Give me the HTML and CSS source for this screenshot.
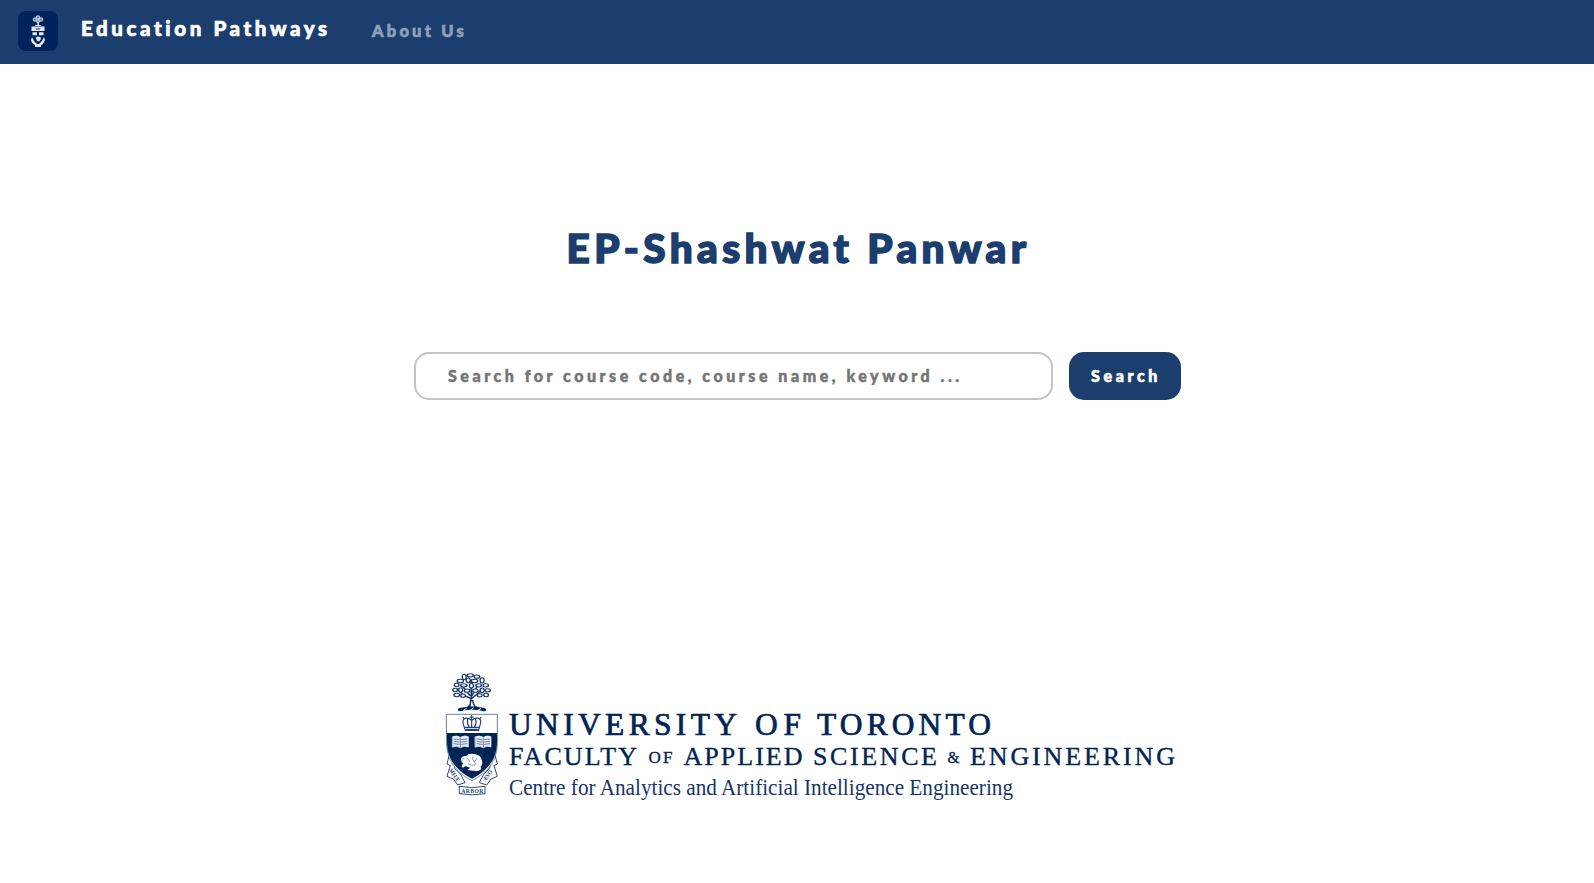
FILE: index.html
```html
<!DOCTYPE html>
<html lang="en">
<head>
<meta charset="utf-8">
<title>Education Pathways</title>
<link rel="stylesheet" href="styles.css">
</head>
<body>
<nav class="navbar">
  <svg class="nav-logo" width="40" height="40" viewBox="0 0 40 40" aria-hidden="true">
    <rect width="40" height="40" rx="8" fill="#00235c"/>
    <g fill="#e4eaf2">
      <g fill="#5d7299" stroke="#b9c5d8" stroke-width="1.300">
        <circle cx="20" cy="6.500" r="1.700"/><circle cx="17" cy="8.500" r="1.600"/><circle cx="23" cy="8.500" r="1.600"/><circle cx="20" cy="10" r="1.500"/>
      </g>
      <path d="M19.400 11h1.400v3h2v1h-5.500v-1h2.100zM13.500 15.500h13v4.500h-13z"/>
      <path d="M17.500 16.500l1.500 1 1-1.500 1 1.500 1.500-1-.5 2.500h-4z" fill="#7388aa"/>
      <path d="M14.500 21.200h4.500v3h-4.500zM21 21.200h4.500v3H21zM17.500 27l2-1.500 3 .5 .5 2-2 2.500-2-.5-.5-1.500z"/>
      <path d="M14 26l2 4 3 3h2l3-3 2-4 1 3-2 4-2 1v2h-6v-2l-3-2-1-3z"/>
    </g>
  </svg>
  <a class="brand">Education Pathways</a>
  <a class="nav-link">About Us</a>
</nav>
<main class="page">
  <h1 class="title">EP-Shashwat Panwar</h1>
  <form class="search">
    <input class="search-input" type="text" placeholder="Search for course code, course name, keyword ...">
    <button class="search-button" type="button">Search</button>
  </form>
  <svg class="faculty-logo" width="740" height="140" viewBox="0 0 740 140" role="img" aria-label="University of Toronto">
    <g transform="scale(.33333)" stroke-linecap="round" stroke-linejoin="round">
      <!-- tree -->
      <g transform="translate(-11 0) scale(1.19 1)">
      <path d="M97 126l3-25-22-13-10-16M100 102l18-17 11-15M101 100l-1-55M97 91l-16-24M103 91l14-30M91 127q8-5 8-20h6q0 15 10 20z" fill="none" stroke="#17356a" stroke-width="4"/>
      <g fill="#fff" stroke="#17356a" stroke-width="3.200">
        <ellipse cx="98" cy="31" rx="8" ry="5"/><ellipse cx="83" cy="36" rx="5" ry="8"/><ellipse cx="115" cy="35" rx="7" ry="5"/><ellipse cx="73" cy="48" rx="8" ry="5"/><ellipse cx="93" cy="46" rx="5" ry="7"/><ellipse cx="109" cy="48" rx="8" ry="5"/><ellipse cx="128" cy="46" rx="5" ry="8"/>
        <ellipse cx="64" cy="60" rx="6" ry="5"/><ellipse cx="82" cy="61" rx="8" ry="5"/><ellipse cx="101" cy="62" rx="5" ry="7"/><ellipse cx="119" cy="61" rx="7" ry="5"/><ellipse cx="137" cy="61" rx="7" ry="5"/>
        <ellipse cx="60" cy="75" rx="6" ry="5"/><ellipse cx="74" cy="75" rx="5" ry="7"/><ellipse cx="90" cy="77" rx="7" ry="5"/><ellipse cx="111" cy="77" rx="7" ry="5"/><ellipse cx="128" cy="76" rx="5" ry="7"/><ellipse cx="142" cy="76" rx="7" ry="5"/>
        <ellipse cx="64" cy="90" rx="7" ry="5"/><ellipse cx="80" cy="92" rx="6" ry="5"/><ellipse cx="122" cy="91" rx="6" ry="5"/><ellipse cx="138" cy="90" rx="6" ry="5"/>
      </g>
      </g>
      <path d="M74 134q37-9 74 0" fill="none" stroke="#002453" stroke-width="10"/>
      <path d="M86 136l8-6M107 135l8-6M129 136l8-5" stroke="#fff" stroke-width="3"/>
      <!-- ribbon ends -->
      <g fill="#fff" stroke="#2b467a" stroke-width="3">
        <path d="M43 270l-7 27 10 5-10 32 19 8 13 18 22-7-13-25-18-18-5-36zM180 270l7 27-10 5 10 32-19 8-13 18-22-7 13-25 18-18 5-36z"/>
        <path d="M74 364q36 8 76 0v22q-38 7-76 0z"/>
      </g>
      <!-- shield -->
      <path d="M35 148h152v83c0 55-28 92-76 116-48-24-76-61-76-116z" fill="#fff" stroke="#6e82a5" stroke-width="3"/>
      <path d="M36 204h150v27c0 51-28 86-75 110-47-24-75-59-75-110z" fill="#002453"/>
      <!-- crown -->
      <g fill="#fff" stroke="#23406f" stroke-width="3.500">
        <path d="M87 184q-8-21 3-24 9-3 20 6 11-9 21-6 11 3 3 24l-3 12H91z"/>
        <path d="M91 187h40M110 166v20M98 163q-3 12 4 22M122 163q4 12-3 22M110 152v14M105 156h10M88 161l-4-4M134 161l4-4M94 193h33"/>
      </g>
      <!-- books -->
      <g fill="#e6edf4" stroke="#fff" stroke-width="2">
        <path d="M53 215q12-5 23 2 12-7 24-2v31q-13-5-24 2-12-7-23-2zM121 215q12-5 24 2 11-7 23-2v31q-12-5-23 2-12-7-24-2z"/>
      </g>
      <path d="M76 218v28M145 218v28M57 222l15 2M57 229l15 2M57 236l15 2M80 224l16-2M80 231l16-2M80 238l16-2M126 222l15 2M126 229l15 2M126 236l15 2M149 224l15-2M149 231l15-2M149 238l15-2" stroke="#314f7b" stroke-width="2"/>
      <!-- beaver -->
      <path d="M78 282q3-10 15-9 11-10 28-5 17 3 20 19 4 15-9 22l-18 8-16-2 7-7-13-5-8 5-5-4 6-9-5-3z" fill="#fff"/>
      <path d="M83 282h4M95 279q7 2 9 11M113 275q-3 9 5 16M125 280q-8 9-5 17M100 297q10 7 21 3" fill="none" stroke="#4d6790" stroke-width="2"/>
      <path d="M113 315q14-10 24-9 6 10-15 13z" fill="#fff"/>
      <g class="motto">
        <text transform="translate(42 315) rotate(57)" textLength="43">VELUT</text>
        <text transform="translate(151 351) rotate(-54)" textLength="38">ÆVO</text>
        <text x="79" y="383" textLength="66">ARBOR</text>
      </g>
    </g>
    <g class="row-university">
      <text x="74" y="70" textLength="228">UNIVERSITY</text>
      <text x="320" y="70" textLength="46">OF</text>
      <text x="382" y="70" textLength="174">TORONTO</text>
    </g>
    <g class="row-faculty">
      <text x="74" y="100" textLength="128">FACULTY</text>
      <text class="small" x="213.500" y="98" textLength="24">OF</text>
      <text x="248.500" y="100" textLength="119">APPLIED</text>
      <text x="378" y="100" textLength="124">SCIENCE</text>
      <text class="small" x="512.500" y="98" textLength="12" lengthAdjust="spacingAndGlyphs">&amp;</text>
      <text x="535" y="100" textLength="205">ENGINEERING</text>
    </g>
    <text class="row-centre" x="74" y="130" textLength="504" lengthAdjust="spacingAndGlyphs">Centre for Analytics and Artificial Intelligence Engineering</text>
  </svg>
</main>
</body>
</html>
```
FILE: styles.css
```css
* { box-sizing: border-box; }

body {
  margin: 0;
  background: #fff;
  font-family: Lato, "Open Sans", sans-serif;
  font-weight: 900;
}

.navbar {
  display: flex;
  align-items: flex-start;
  height: 64px;
  padding: 11px 18px 0;
  background: #1c3e6e;
}

.nav-logo { flex: none; }

.brand {
  margin-left: 23px;
  width: 291px;
  padding-top: 3px;
  color: #fff;
  font-size: 20.500px;
  line-height: 28px;
  letter-spacing: 3.600px;
  white-space: nowrap;
  -webkit-text-stroke: .7px #fff;
}

.nav-link {
  padding-top: 8px;
  color: #8e9fb7;
  font-size: 16.500px;
  line-height: 24px;
  letter-spacing: 3.200px;
  white-space: nowrap;
  -webkit-text-stroke: .7px #8e9fb7;
}

.page {
  display: flex;
  flex-direction: column;
  align-items: center;
}

.title {
  margin: 159px 0 0;
  padding-left: 3px;
  color: #1c3e6e;
  font-size: 40.500px;
  font-weight: 900;
  line-height: 50px;
  letter-spacing: 4.400px;
  white-space: nowrap;
  -webkit-text-stroke: 1.600px #1c3e6e;
}

.search {
  display: flex;
  gap: 16px;
  margin: 79px 0 0 1px;
}

.search-input {
  width: 639px;
  height: 48px;
  padding: 0 32px 2px;
  border: 2px solid #c3c3c3;
  border-radius: 15px;
  background: #fff;
  font: 900 16px Lato, sans-serif;
  letter-spacing: 3.520px;
}

.search-input::placeholder {
  color: #757575;
  opacity: 1;
  -webkit-text-stroke: .5px #757575;
}

.search-button {
  width: 112px;
  height: 48px;
  padding: 0 0 2px 2px;
  border: 0;
  border-radius: 15px;
  background: #1c3e6e;
  color: #fff;
  font: 900 16px Lato, sans-serif;
  letter-spacing: 3.600px;
  -webkit-text-stroke: .6px #fff;
}

.faculty-logo {
  margin: 265px 0 0 16px;
  overflow: visible;
  fill: #002453;
  font-family: "Liberation Serif", serif;
  font-weight: 400;
}

.motto { font-size: 17px; font-weight: 700; fill: #2b467a; }
.row-university { font-size: 31.500px; stroke: #002453; stroke-width: .7px; }
.row-faculty { font-size: 26px; stroke: #002453; stroke-width: .35px; }
.row-faculty .small { font-size: 17px; }
.row-centre { font-size: 23px; fill: #17356a; }
```
